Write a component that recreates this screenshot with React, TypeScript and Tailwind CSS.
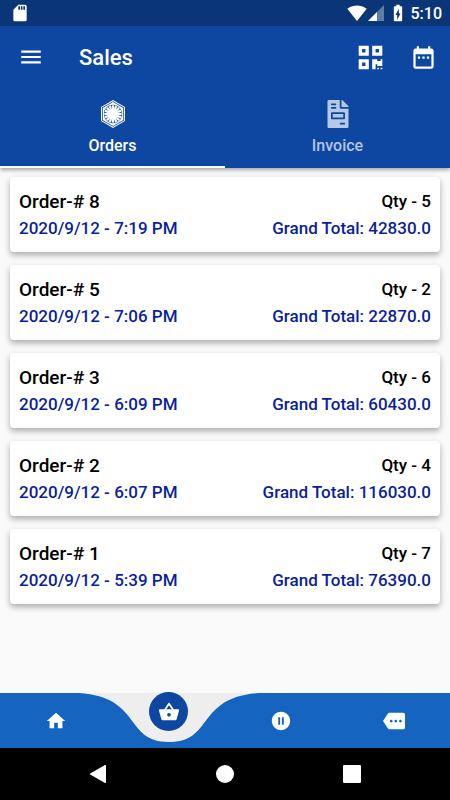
import React, { useState } from "react";
import {
  MdBatteryChargingFull,
  MdDateRange,
  MdHome,
  MdMenu,
  MdMore,
  MdPauseCircleFilled,
  MdSdCard,
  MdShoppingBasket,
  MdSignalWifi4Bar,
} from "react-icons/md";
import { FaFileInvoice, FaFirstOrder, FaQrcode } from "react-icons/fa";

interface Order {
  id: number;
  date: string;
  qty: number;
  total: string;
}

const orders: Order[] = [
  { id: 8, date: "2020/9/12 - 7:19 PM", qty: 5, total: "42830.0" },
  { id: 5, date: "2020/9/12 - 7:06 PM", qty: 2, total: "22870.0" },
  { id: 3, date: "2020/9/12 - 6:09 PM", qty: 6, total: "60430.0" },
  { id: 2, date: "2020/9/12 - 6:07 PM", qty: 4, total: "116030.0" },
  { id: 1, date: "2020/9/12 - 5:39 PM", qty: 7, total: "76390.0" },
];

const tabs = [
  { name: "Orders", icon: FaFirstOrder },
  { name: "Invoice", icon: FaFileInvoice },
];

const StatusBar: React.FC = () => (
  <div className="flex h-[26px] items-center justify-between bg-[#0a3677] pr-2 pl-[10px] text-white">
    <MdSdCard className="h-5 w-5" />
    <div className="flex items-center">
      <MdSignalWifi4Bar className="h-5 w-5" />
      <svg viewBox="0 0 16 16" className="ml-px h-4 w-4" fill="currentColor">
        <path d="M16 0v16H0z" opacity="0.35" />
        <path d="M9 7v9H0z" />
      </svg>
      <MdBatteryChargingFull className="ml-1 h-5 w-5" />
      <span className="ml-[3px] pt-px text-base font-medium">5:10</span>
    </div>
  </div>
);

const OrderCard: React.FC<{ order: Order }> = ({ order }) => (
  <li className="rounded-[4px] bg-white px-[9px] pt-3 pb-[10px] shadow-[0_3px_6px_rgba(0,0,0,0.32)]">
    <div className="flex h-[26px] items-center justify-between text-black">
      <h2 className="text-[19px] font-medium">Order-# {order.id}</h2>
      <span className="text-[17px] font-medium">Qty - {order.qty}</span>
    </div>
    <div className="flex h-[27px] items-center justify-between text-[17px] font-medium text-[#0a1f9c]">
      <span>{order.date}</span>
      <span>Grand Total: {order.total}</span>
    </div>
  </li>
);

const BottomNav: React.FC = () => (
  <nav className="grid h-[55px] grid-cols-4 bg-[#1565c0] text-white">
    <button aria-label="Home" className="flex items-center justify-center">
      <MdHome className="h-[22px] w-[22px]" />
    </button>
    <div className="relative flex justify-center">
      {/* Curved cut-out behind the selected item */}
      <svg
        viewBox="0 0 180 50"
        className="pointer-events-none absolute top-0 left-1/2 h-[50px] w-[180px] -translate-x-1/2"
      >
        <path d="M0 0C63 4 45 49 90 49S117 4 180 0z" fill="#eeeeee" />
      </svg>
      <button
        aria-label="Sales"
        className="relative -mt-px flex h-[39px] w-[39px] items-center justify-center rounded-full bg-[#0d47a1]"
      >
        <MdShoppingBasket className="h-[22px] w-[22px]" />
      </button>
    </div>
    <button aria-label="On hold" className="flex items-center justify-center">
      <MdPauseCircleFilled className="h-[22px] w-[22px]" />
    </button>
    <button aria-label="More" className="flex items-center justify-center">
      <MdMore className="h-[22px] w-[22px]" />
    </button>
  </nav>
);

const SystemNav: React.FC = () => (
  <div className="flex h-[52px] items-center justify-center gap-[109px] bg-black text-white">
    <button aria-label="Back">
      <svg viewBox="0 0 18 18" className="h-[18px] w-[18px]" fill="currentColor">
        <path d="M17 .6v16.8a.6.6 0 0 1-1 .5L1.2 9.6a.7.7 0 0 1 0-1.2L16 .1a.6.6 0 0 1 1 .5z" />
      </svg>
    </button>
    <button aria-label="Home screen" className="h-[18px] w-[18px] rounded-full bg-white" />
    <button aria-label="Recent apps" className="h-[18px] w-[18px] rounded-[1px] bg-white" />
  </div>
);

const App: React.FC = () => {
  const [activeTab, setActiveTab] = useState("Orders");

  return (
    <div className="flex min-h-screen flex-col bg-[#fafafa] font-[Roboto,sans-serif]">
      <StatusBar />

      {/* Header */}
      <header className="bg-[#0d47a1] text-white shadow-[0_2px_4px_rgba(0,0,0,0.35)]">
        <div className="flex h-[62px] items-center pr-[13px] pl-[18px]">
          <button aria-label="Menu">
            <MdMenu className="h-[26px] w-[26px]" />
          </button>
          <h1 className="ml-[35px] flex-1 text-[22px] font-medium">Sales</h1>
          <button aria-label="Scan code" className="mr-[26px]">
            <FaQrcode className="h-[27px] w-[27px]" />
          </button>
          <button aria-label="Pick dates">
            <MdDateRange className="h-[27px] w-[27px]" />
          </button>
        </div>

        <div role="tablist" className="grid grid-cols-2">
          {tabs.map(({ name, icon: Icon }) => (
            <button
              key={name}
              role="tab"
              aria-selected={activeTab === name}
              onClick={() => setActiveTab(name)}
              className={`flex h-20 flex-col items-center border-b-2 pt-3 ${
                activeTab === name
                  ? "border-white text-white"
                  : "border-transparent text-white/70"
              }`}
            >
              <Icon className="h-7 w-7" />
              <span className="mt-[6px] text-base leading-6 font-medium">{name}</span>
            </button>
          ))}
        </div>
      </header>

      {/* Orders */}
      <main className="flex-1 px-[10px] pt-[9px] pb-5">
        <ul className="flex flex-col gap-[13px]">
          {orders.map((order) => (
            <OrderCard key={order.id} order={order} />
          ))}
        </ul>
      </main>

      <BottomNav />
      <SystemNav />
    </div>
  );
};

export default App;
